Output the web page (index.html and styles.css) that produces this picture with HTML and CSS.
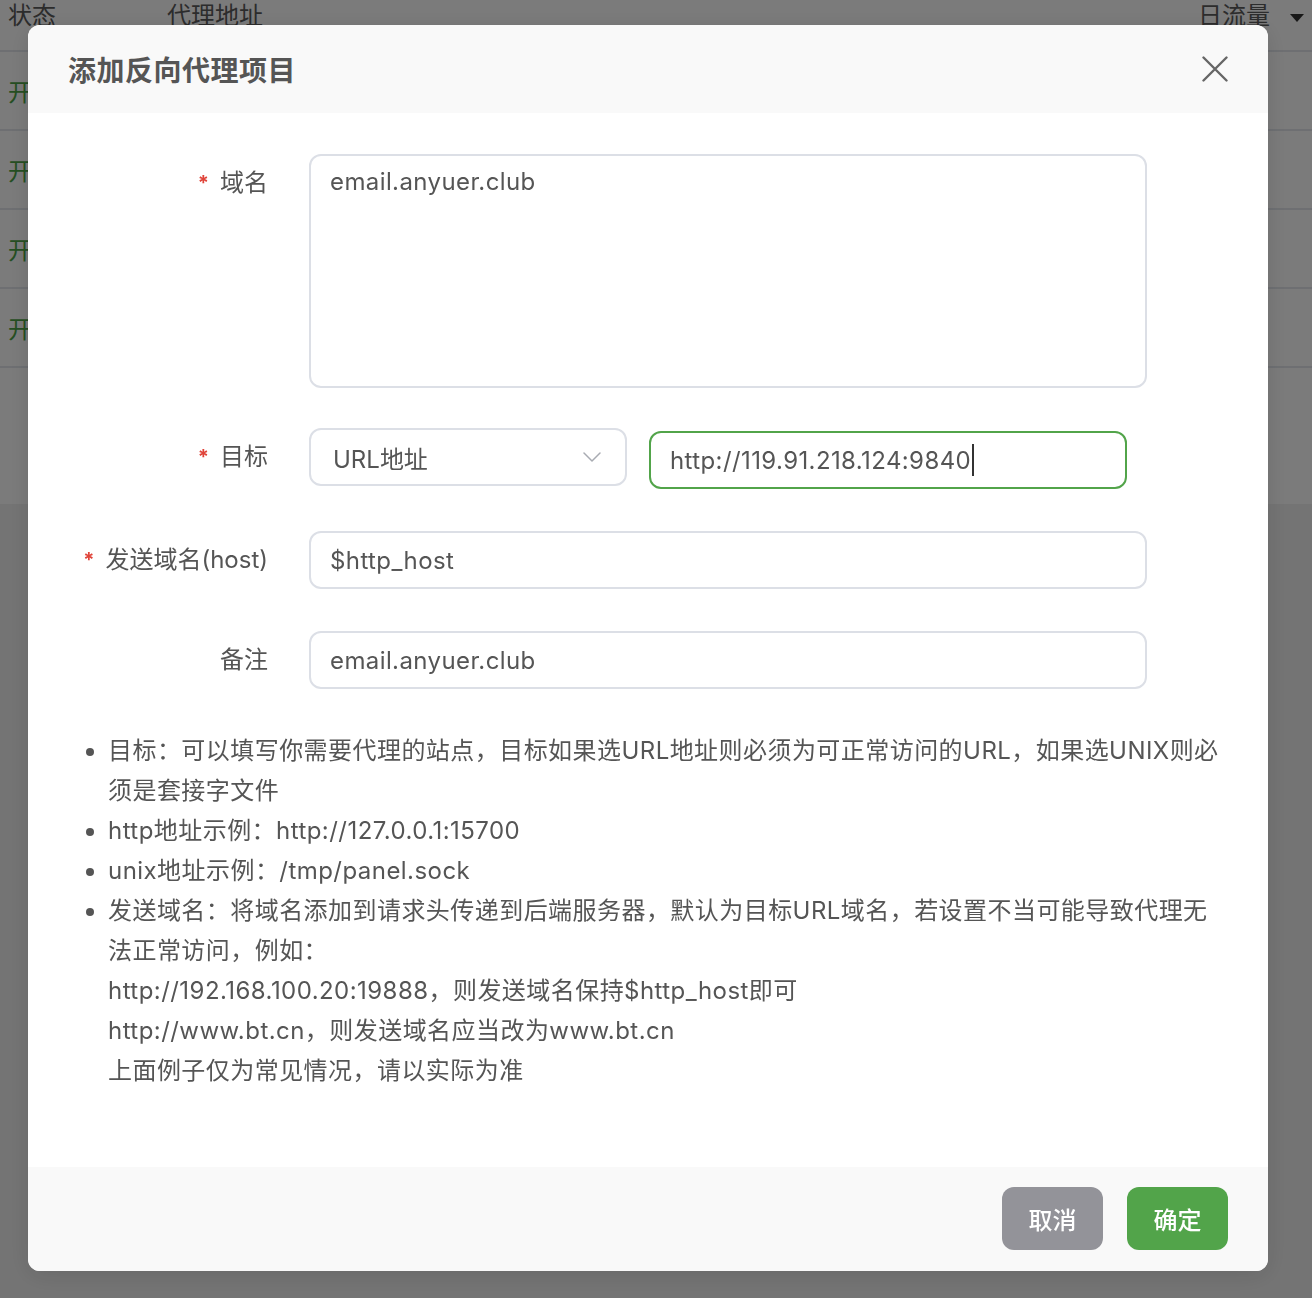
FILE: index.html
```html
<!DOCTYPE html>
<html lang="zh-CN">
<head>
<meta charset="utf-8">
<title>添加反向代理项目</title>
<link rel="stylesheet" href="styles.css">
</head>
<body>
<div class="page">
  <div class="table">
    <div class="thead">
      <span class="th th-status">状态</span>
      <span class="th th-addr">代理地址</span>
      <span class="th th-flow">日流量</span>
      <span class="sort-caret"></span>
    </div>
    <div class="trow"><span class="on">开</span></div>
    <div class="trow"><span class="on">开</span></div>
    <div class="trow"><span class="on">开</span></div>
    <div class="trow"><span class="on">开</span></div>
    <div class="tfoot"></div>
  </div>
</div>

<div class="mask"></div>

<div class="modal">
  <div class="modal-head">
    <h2 class="modal-title">添加反向代理项目</h2>
    <button class="close-btn" type="button" aria-label="关闭">
      <svg width="26" height="26" viewBox="0 0 26 26"><path d="M1.5 1.5 L24.5 24.5 M24.5 1.5 L1.5 24.5" stroke="#666" stroke-width="2.4" stroke-linecap="round" fill="none"/></svg>
    </button>
  </div>

  <div class="modal-body">
    <div class="form">
      <div class="form-row">
        <div class="form-label"><span class="req">*</span>域名</div>
        <div class="form-ctrl">
          <div class="field field-textarea">email.anyuer.club</div>
        </div>
      </div>

      <div class="form-row">
        <div class="form-label"><span class="req">*</span>目标</div>
        <div class="form-ctrl form-ctrl-split">
          <div class="field field-select">
            <span>URL地址</span>
            <svg width="18" height="10" viewBox="0 0 18 10"><path d="M1 1 L9 9 L17 1" stroke="#a8abb2" stroke-width="1.5" fill="none" stroke-linejoin="round" stroke-linecap="round"/></svg>
          </div>
          <div class="field field-input field-focus">http://119.91.218.124:9840<span class="caret"></span></div>
        </div>
      </div>

      <div class="form-row">
        <div class="form-label"><span class="req">*</span>发送域名(host)</div>
        <div class="form-ctrl">
          <div class="field field-input field-wide">$http_host</div>
        </div>
      </div>

      <div class="form-row">
        <div class="form-label">备注</div>
        <div class="form-ctrl">
          <div class="field field-input field-wide">email.anyuer.club</div>
        </div>
      </div>
    </div>

    <ul class="notes">
      <li>目标：可以填写你需要代理的站点，目标如果选URL地址则必须为可正常访问的URL，如果选UNIX则必须是套接字文件</li>
      <li>http地址示例：http://127.0.0.1:15700</li>
      <li>unix地址示例：/tmp/panel.sock</li>
      <li>发送域名：将域名添加到请求头传递到后端服务器，默认为目标URL域名，若设置不当可能导致代理无法正常访问，例如：<br>http://192.168.100.20:19888，则发送域名保持$http_host即可<br>http://www.bt.cn，则发送域名应当改为www.bt.cn<br>上面例子仅为常见情况，请以实际为准</li>
    </ul>
  </div>

  <div class="modal-foot">
    <button class="btn btn-cancel" type="button">取消</button>
    <button class="btn btn-ok" type="button">确定</button>
  </div>
</div>
</body>
</html>
```

FILE: styles.css
```css
html, body {
  margin: 0;
  padding: 0;
}

body {
  background: #f1f1f1;
  font-family: Inter, "Noto Sans CJK SC", sans-serif;
  color: #555;
  width: 1312px;
  height: 1298px;
  overflow: hidden;
}

/* ---------- background table ---------- */
.page {
  width: 100%;
}

.table {
  background: #fff;
}

.thead {
  height: 52px;
  display: flex;
  align-items: flex-start;
  padding: 0 8px;
  border-bottom: 2px solid #e4e7ed;
  box-sizing: border-box;
  font-size: 24px;
  color: #5c5c5c;
  line-height: 32px;
}

.th-status {
  width: 159px;
}

.th-addr {
  flex: 1;
}

.th-flow {
  margin-right: 20px;
}

.sort-caret {
  width: 0;
  height: 0;
  margin-top: 14px;
  border-left: 7px solid transparent;
  border-right: 7px solid transparent;
  border-top: 8px solid #333;
}

.trow {
  height: 79px;
  box-sizing: border-box;
  border-bottom: 2px solid #e4e7ed;
  display: flex;
  align-items: center;
  padding-left: 8px;
  font-size: 24px;
}

.on {
  color: #4fa447;
}

.tfoot {
  height: 136px;
}

/* ---------- mask & modal ---------- */
.mask {
  position: fixed;
  inset: 0;
  background: rgba(0, 0, 0, 0.518);
}

.modal {
  position: fixed;
  left: 28px;
  top: 25px;
  width: 1240px;
  height: 1246px;
  background: #fff;
  border-radius: 12px;
  overflow: hidden;
  display: flex;
  flex-direction: column;
  box-shadow: 0 4px 24px rgba(0, 0, 0, 0.12);
}

.modal-head {
  flex: none;
  height: 88px;
  background: #f9f9f9;
  display: flex;
  align-items: center;
  justify-content: space-between;
  padding: 0 40px;
}

.modal-title {
  margin: 0;
  font-size: 28px;
  font-weight: 600;
  color: #555;
  letter-spacing: 0.5px;
}

.close-btn {
  border: 0;
  background: none;
  padding: 0;
  width: 26px;
  height: 26px;
  display: flex;
}

.modal-body {
  flex: 1;
  padding-top: 41px;
}

/* ---------- form ---------- */
.form-row {
  display: flex;
  margin-bottom: 42px;
}

.form-row:first-child {
  margin-bottom: 40px;
}

.form-label {
  flex: none;
  width: 240px;
  text-align: right;
  line-height: 58px;
  font-size: 24px;
  color: #555;
}

.req {
  color: #e0443a;
  font-size: 20px;
  font-weight: 700;
  margin-right: 11px;
  vertical-align: 1px;
}

.form-ctrl {
  margin-left: 41px;
}

.form-ctrl-split {
  display: flex;
  align-items: flex-start;
}

.field {
  box-sizing: border-box;
  border: 2px solid #dcdfe6;
  border-radius: 12px;
  font-size: 24px;
  color: #555;
  background: #fff;
  letter-spacing: 0.4px;
}

.field-textarea {
  width: 838px;
  height: 234px;
  padding: 8px 19px;
  line-height: 36px;
}

.field-select {
  width: 318px;
  height: 58px;
  display: flex;
  align-items: center;
  justify-content: space-between;
  padding: 0 24px 0 22px;
  letter-spacing: 0;
}

.field-input {
  height: 58px;
  display: flex;
  align-items: center;
  padding: 0 19px;
}

.field-wide {
  width: 838px;
}

.field-focus {
  width: 478px;
  margin-left: 22px;
  margin-top: 3px;
  border-color: #52a44a;
}

.caret {
  display: inline-block;
  width: 2px;
  height: 32px;
  background: #333;
  margin-left: 1px;
}

/* ---------- notes ---------- */
.notes {
  margin: 0;
  padding: 0 44px 0 80px;
  font-size: 24px;
  line-height: 40px;
  letter-spacing: 0.45px;
  color: #555;
}

/* ---------- footer ---------- */
.modal-foot {
  flex: none;
  height: 104px;
  background: #f9f9f9;
  display: flex;
  align-items: center;
  justify-content: flex-end;
  gap: 24px;
  padding: 0 40px 1px 0;
  box-sizing: border-box;
}

.btn {
  width: 101px;
  height: 63px;
  border: 0;
  border-radius: 12px;
  color: #fff;
  font-family: Inter, "Noto Sans CJK SC", sans-serif;
  font-size: 24px;
  font-weight: 500;
}

.btn-cancel {
  background: #939399;
}

.btn-ok {
  background: #52a44a;
}
```
